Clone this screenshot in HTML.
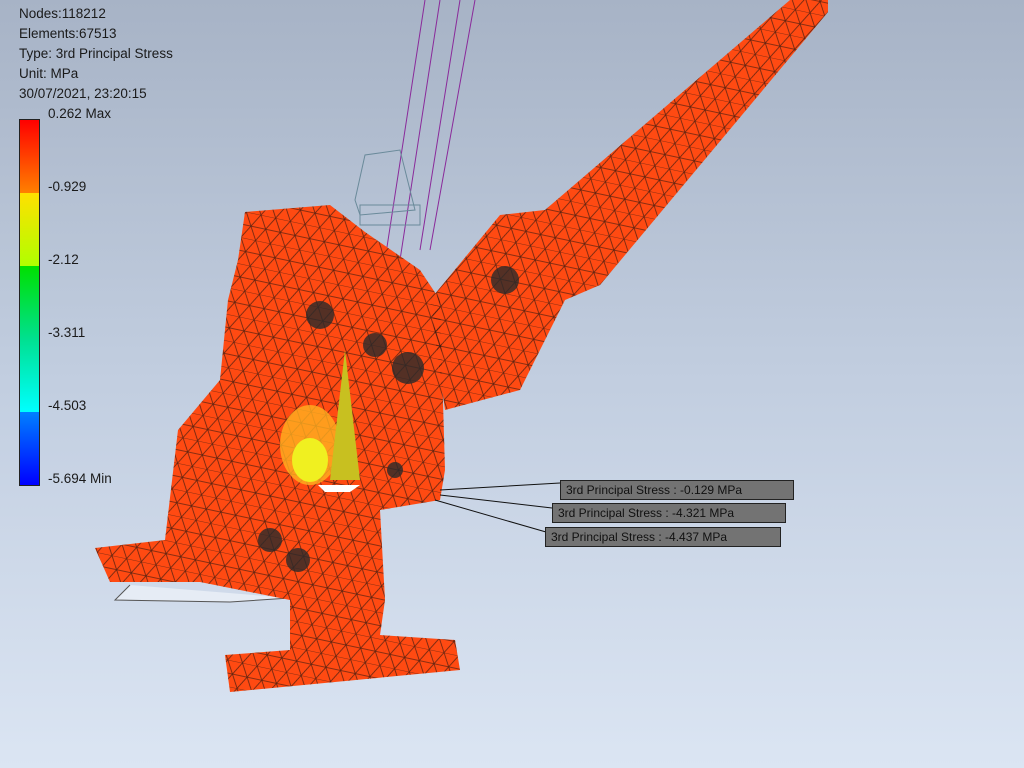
<!DOCTYPE html>
<html><head><meta charset="utf-8"><style>
body{margin:0;width:1024px;height:768px;overflow:hidden;background:linear-gradient(#a7b3c6 0%,#c2cee0 50%,#dbe5f3 100%);font-family:"Liberation Sans",sans-serif;position:relative}
.t{position:absolute;left:19px;font-size:13.5px;color:#1a1a1a;line-height:20px}
.lab{position:absolute;left:48px;font-size:13.5px;color:#1a1a1a}
.bar{position:absolute;left:19px;top:119px;width:19px;height:365px;border:1px solid #222;background:linear-gradient(#ff0000 0%,#ff8000 20%,#ffe000 20%,#b0ff00 40%,#00e000 40%,#00e090 60%,#00ffff 80%,#0080ff 80%,#0000ff 100%)}
.box{position:absolute;height:20px;background:#737373;border:1px solid #222;color:#111;font-size:12px;line-height:18px;padding-left:5px;box-sizing:border-box}
</style></head><body>
<div class="t" style="top:4px">Nodes:118212<br>Elements:67513<br>Type: 3rd Principal Stress<br>Unit: MPa<br>30/07/2021, 23:20:15</div>
<div class="bar"></div>
<div class="lab" style="top:106px">0.262 Max</div>
<div class="lab" style="top:179px">-0.929</div>
<div class="lab" style="top:252px">-2.12</div>
<div class="lab" style="top:325px">-3.311</div>
<div class="lab" style="top:398px">-4.503</div>
<div class="lab" style="top:471px">-5.694 Min</div>
<svg width="1024" height="768" style="position:absolute;left:0;top:0">
<defs><pattern id="m" width="30" height="26" patternUnits="userSpaceOnUse" patternTransform="rotate(12)"><path d="M0 0L30 0L15 26Z M0 26L15 0 M30 26L15 0 M0 13L30 13" stroke="#3a1a10" stroke-width="0.8" fill="none" opacity="0.8"/></pattern></defs>
<g stroke="#8a2a9a" stroke-width="1" fill="none"><path d="M425 0L385 260M440 0L400 260M460 0L420 250M475 0L430 250"/></g>
<g stroke="#6a8a9a" stroke-width="1" fill="none"><path d="M355 200L365 155L400 150L415 210L360 215Z M360 205L420 205L420 225L360 225Z"/></g>
<path d="M130 585L115 600L230 602L290 598" stroke="#555" fill="#e6ecf5"/>
<path d="M545 210L790 0L828 0L828 12L600 285L565 300L520 390L445 410L430 300L500 215Z" fill="#ff4a12"/>
<path d="M245 212L330 205L365 232L420 270L440 300L445 470L440 500L380 510L385 600L380 635L455 640L460 670L230 692L225 655L290 650L290 600L200 582L110 582L95 548L165 540L178 430L220 380L228 300L238 260Z" fill="#ff4a12"/>
<path d="M545 210L790 0L828 0L828 12L600 285L565 300L520 390L445 410L430 300L500 215Z" fill="url(#m)"/>
<path d="M245 212L330 205L365 232L420 270L440 300L445 470L440 500L380 510L385 600L380 635L455 640L460 670L230 692L225 655L290 650L290 600L200 582L110 582L95 548L165 540L178 430L220 380L228 300L238 260Z" fill="url(#m)"/>
<ellipse cx="310" cy="445" rx="30" ry="40" fill="#ffb020" opacity="0.8"/>
<ellipse cx="310" cy="460" rx="18" ry="22" fill="#f0f020"/>
<path d="M345 350L330 480L360 480Z" fill="#c8c020"/>
<g fill="#2a2a2a" opacity="0.8"><circle cx="505" cy="280" r="14"/><circle cx="408" cy="368" r="16"/><circle cx="375" cy="345" r="12"/><circle cx="270" cy="540" r="12"/><circle cx="298" cy="560" r="12"/><circle cx="395" cy="470" r="8"/><circle cx="320" cy="315" r="14"/></g>
<path d="M318 485L360 485L350 492L325 492Z" fill="#fff"/>
<g stroke="#111" stroke-width="1" fill="none"><path d="M440 490L560 483M440 495L552 508M435 500L546 532"/></g>
</svg>
<div class="box" style="left:560px;top:480px;width:234px">3rd Principal Stress : -0.129 MPa</div>
<div class="box" style="left:552px;top:503px;width:234px">3rd Principal Stress : -4.321 MPa</div>
<div class="box" style="left:545px;top:527px;width:236px">3rd Principal Stress : -4.437 MPa</div>
</body></html>
